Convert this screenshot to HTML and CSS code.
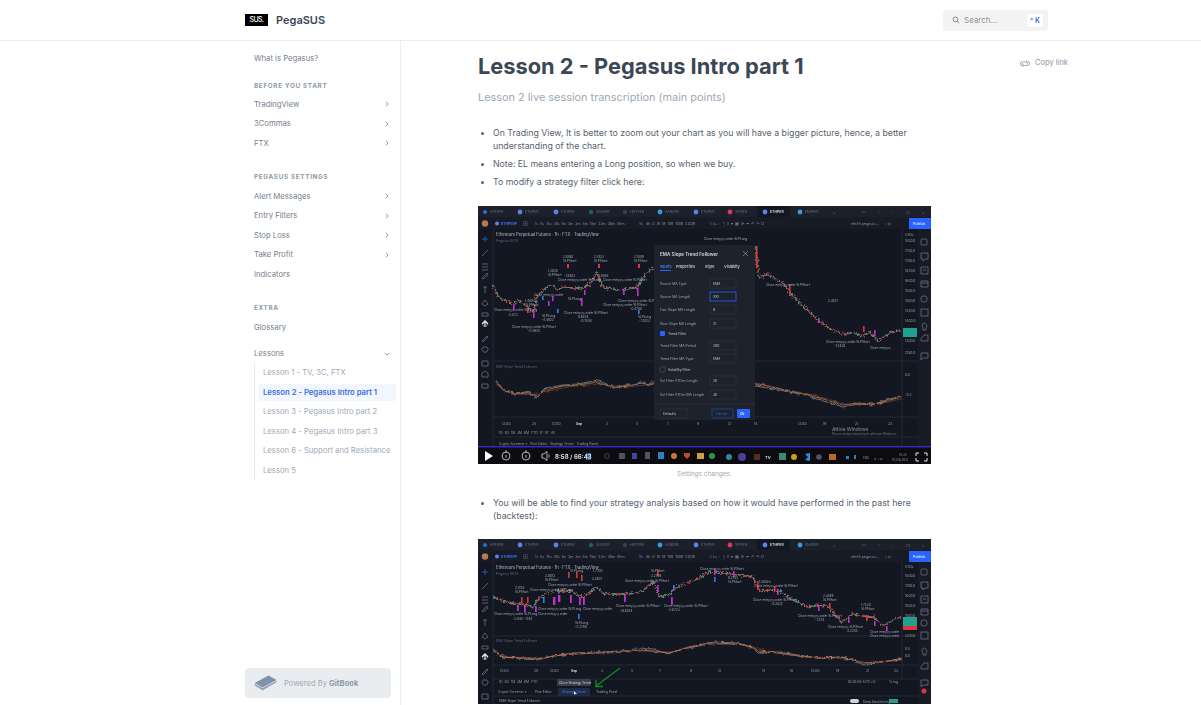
FILE: index.html
```html
<!DOCTYPE html>
<html lang="en">
<head>
    <meta charset="UTF-8">
    <title>Lesson 2 - Pegasus Intro part 1 - PegaSUS</title>
    <link rel="stylesheet" href="styles.css">
</head>
<body>
    <!-- Top bar -->
    <header class="topbar">
        <div class="brand">
            <span class="brand-logo">SUS.</span>
            <span class="brand-name">PegaSUS</span>
        </div>
        <div class="search">
            <svg class="search-icon" viewBox="0 0 12 12"><circle cx="5.2" cy="5.2" r="3.6"/><path d="M8 8l2.8 2.8"/></svg>
            <span class="search-text">Search...</span>
            <span class="search-key">^ K</span>
        </div>
    </header>

    <div class="page">
        <!-- Sidebar -->
        <aside class="sidebar">
            <nav class="nav">
                <a class="nav-item">What is Pegasus?</a>

                <h5 class="nav-title">Before you start</h5>
                <a class="nav-item">TradingView <svg class="chev" viewBox="0 0 8 8"><path d="M2.5 1l3 3-3 3"/></svg></a>
                <a class="nav-item">3Commas <svg class="chev" viewBox="0 0 8 8"><path d="M2.5 1l3 3-3 3"/></svg></a>
                <a class="nav-item">FTX <svg class="chev" viewBox="0 0 8 8"><path d="M2.5 1l3 3-3 3"/></svg></a>

                <h5 class="nav-title nav-title-gap">Pegasus settings</h5>
                <a class="nav-item">Alert Messages <svg class="chev" viewBox="0 0 8 8"><path d="M2.5 1l3 3-3 3"/></svg></a>
                <a class="nav-item">Entry Filters <svg class="chev" viewBox="0 0 8 8"><path d="M2.5 1l3 3-3 3"/></svg></a>
                <a class="nav-item">Stop Loss <svg class="chev" viewBox="0 0 8 8"><path d="M2.5 1l3 3-3 3"/></svg></a>
                <a class="nav-item">Take Profit <svg class="chev" viewBox="0 0 8 8"><path d="M2.5 1l3 3-3 3"/></svg></a>
                <a class="nav-item">Indicators</a>

                <h5 class="nav-title nav-title-gap">Extra</h5>
                <a class="nav-item">Glossary</a>
                <a class="nav-item nav-item-gap">Lessons <svg class="chev" viewBox="0 0 8 8"><path d="M1 2.5l3 3 3-3"/></svg></a>
                <div class="subnav">
                    <a class="sub-item">Lesson 1 - TV, 3C, FTX</a>
                    <a class="sub-item active">Lesson 2 - Pegasus Intro part 1</a>
                    <a class="sub-item">Lesson 3 - Pegasus Intro part 2</a>
                    <a class="sub-item">Lesson 4 - Pegasus Intro part 3</a>
                    <a class="sub-item">Lesson 6 - Support and Resistance</a>
                    <a class="sub-item">Lesson 5</a>
                </div>
            </nav>
            <div class="powered">
                <svg class="powered-icon" viewBox="0 0 23 16">
                    <path class="book-top" d="M0.5 8L14.5 0.5 22.5 5 8.5 12.5z"/>
                    <path class="book-side" d="M0.5 8.8L8.5 13.3 22.5 5.8V7.2L8.7 15.2 1 10.8z"/>
                </svg>
                <span>Powered By <b>GitBook</b></span>
            </div>
        </aside>

        <!-- Main content -->
        <main class="content">
            <article class="article">
                <h1>Lesson 2 - Pegasus Intro part 1</h1>
                <p class="lead">Lesson 2 live session transcription (main points)</p>

                <ul class="points">
                    <li>On Trading View, It is better to zoom out your chart as you will have a bigger picture, hence, a better understanding of the chart.</li>
                    <li>Note: EL means entering a Long position, so when we buy.</li>
                    <li>To modify a strategy filter click here:</li>
                </ul>

                <figure class="shot">
                    <svg class="tv tv-one" viewBox="0 0 453 258">
                        <defs>
                            <filter id="jag" x="-5%" y="-20%" width="110%" height="140%">
                                <feTurbulence type="fractalNoise" baseFrequency="0.45" numOctaves="2" seed="4"/>
                                <feDisplacementMap in="SourceGraphic" scale="6" xChannelSelector="R" yChannelSelector="G"/>
                            </filter>
                            <filter id="wob" x="-5%" y="-20%" width="110%" height="140%">
                                <feTurbulence type="fractalNoise" baseFrequency="0.25" numOctaves="2" seed="9"/>
                                <feDisplacementMap in="SourceGraphic" scale="3.5" xChannelSelector="R" yChannelSelector="G"/>
                            </filter>
                            <g id="tv-top">
                                <rect class="tv-bar" width="453" height="11"/>
                                <g class="tv-tabs">
                                    <circle cx="7" cy="6" r="2" class="c-blue"/><text x="12" y="7.2">APEPER</text>
                                    <circle cx="42" cy="6" r="2.4" class="c-lblue"/><text x="47" y="7.2">ETHPER</text>
                                    <circle cx="78" cy="6" r="2.4" class="c-lblue"/><text x="83" y="7.2">ETHPER</text>
                                    <circle cx="113" cy="6" r="2.2" class="c-teal"/><text x="118" y="7.2">SOLPER</text>
                                    <circle cx="147" cy="6" r="2.2" class="c-grey"/><text x="152" y="7.2">HNTPER</text>
                                    <circle cx="182" cy="6" r="2.4" class="c-sky"/><text x="187" y="7.2">SANDPE</text>
                                    <circle cx="218" cy="6" r="2.4" class="c-lblue"/><text x="223" y="7.2">ETHPER</text>
                                    <circle cx="252" cy="6" r="2.4" class="c-red"/><text x="257" y="7.2">YFIPER</text>
                                    <rect x="279" y="0" width="33" height="11" class="tv-tab-on"/>
                                    <circle cx="287" cy="6" r="2.4" class="c-lblue"/><text x="292" y="7.2" class="tab-on-text">ETHPER</text>
                                    <circle cx="322" cy="6" r="2.4" class="c-sky"/><text x="327" y="7.2">ENSPER</text>
                                    <text x="355" y="7.5">+</text>
                                    <text x="384" y="7.2">▭</text><text x="400" y="7.2">···</text>
                                    <text x="414" y="7.5">–</text><text x="428" y="7.5">❐</text><text x="444" y="7.5">×</text>
                                </g>
                                <rect class="tv-bg2" y="11" width="453" height="12"/>
                                <circle cx="7" cy="17.5" r="3.2" class="c-avatar"/>
                                <circle cx="19" cy="17.5" r="2" class="c-lblue"/>
                                <text x="23" y="18.8" class="t-sym">ETHPERP</text>
                                <text x="45" y="18.8" class="t-tool">⊕</text>
                                <text x="57" y="18.8" class="t-tool" xml:space="preserve">1s  5s  15s  30s  1m  2m  3m  5m  15m  23m  30m  45m</text>
                                <text x="161" y="18.8" class="t-sym">1h</text>
                                <text x="168" y="18.8" class="t-tool" xml:space="preserve">4h  D  W  M  10R  100R  2122R</text>
                                <text x="232" y="18.8" class="t-tool" xml:space="preserve">⌇ ⫴ ⌂ ⎍  ⋮ ⌸  ▾  ▦  ⟳  ⏮  ↶  ↷  ▢</text>
                                <text x="373" y="18.8" class="t-tool">eth/th pegasus...</text>
                                <text x="407" y="18.8" class="t-tool">⌕  ⚙</text>
                                <rect class="publish" x="431" y="12" width="22" height="11"/>
                                <text x="435" y="19" class="t-pub">Publish</text>
                            </g>
                            <g id="tv-left">
                                <g class="tv-line-soft">
                                    <path class="ico-blue" d="M4 33h6M7 30v6"/>
                                    <path d="M4 50l6-6M4 58h6M4 61h6M4 64h6M4 72l5-5 1 2-5 4zM5 81h4M7 81v6M4 98l3-4 3 4-3 2zM4 107h6v3H4zM5 116l2-2 2 2v4H5z"/>
                                    <path class="ico-white" d="M7 115v6M4 118l3-3 3 3"/>
                                    <path d="M4 135l5-5 1 1-5 5zM5 141a3 3 0 1 0 4 0zM4 155h6v5H4zM4 167l3-2 3 2v4H4zM4 178h6v4H4z"/>
                                </g>
                            </g>
                            <g id="tv-right">
                                <rect class="tv-bg2" x="440" y="23" width="13" height="217"/>
                                <g class="tv-line-soft">
                                    <rect x="443" y="33" width="6" height="6" rx="1"/>
                                    <path d="M443 47h7v6h-3l-2 2v-2h-2zM443 61h7v7h-7zM445 64h3M443 75h7v6h-7zM443 77h7"/>
                                    <circle cx="446" cy="93" r="3.2"/>
                                    <rect x="443" y="103" width="7" height="7"/>
                                    <path d="M446 117a3 3 0 0 1 2 5v2h-3v-2a3 3 0 0 1 1-5zM443 133l3-4 4 0v6h-7zM443 147h7v5h-5l-2 2z"/>
                                </g>
                            </g>
                        </defs>

                        <rect class="tv-bg" width="453" height="258"/>
                        <use href="#tv-top"/>
                        <use href="#tv-left"/>
                        <use href="#tv-right"/>
                        <path class="tv-div" d="M15 23v217M424 23v217M15 155h425M15 211h425M15 231h425"/>

                        <text x="18" y="30" class="t-title">Ethereum Perpetual Futures · 1h · FTX · TradingView</text>
                        <text x="18" y="36" class="t-dim">Pegasus BETA</text>

                        <!-- price line -->
                        <g class="jagged">
                            <polyline class="px-red" points="15,79 20,90 25,94 35,97 42,95 49,101 55,107 59,91 65,84 72,79 80,84 85,81 95,82 105,82 112,78 119,67 125,81 139,84 150,83 159,81 165,72 169,66 176,62"/>
                            <polyline class="px-teal" points="15,79 20,90 25,94 35,97 42,95 49,101 55,107 59,91 65,84 72,79 80,84 85,81 95,82 105,82 112,78 119,67 125,81 139,84 150,83 159,81 165,72 169,66 176,62"/>
                            <polyline class="px-red" points="277,40 281,72 290,68 299,74 306,78 312,87 325,100 338,112 345,118 355,124 365,128 375,127 385,130 392,126 400,135 412,127 423,124"/>
                            <polyline class="px-teal" points="277,40 281,72 290,68 299,74 306,78 312,87 325,100 338,112 345,118 355,124 365,128 375,127 385,130 392,126 400,135 412,127 423,124"/>
                        </g>

                        <!-- signals -->
                        <g class="sig-mag">
                            <rect x="35" y="98" width="1.6" height="6"/><rect x="70" y="95" width="1.6" height="5"/><rect x="74" y="90" width="1.6" height="5"/>
                            <rect x="103" y="92" width="1.6" height="8"/><rect x="106" y="84" width="1.6" height="5"/><rect x="145" y="84" width="1.6" height="5"/>
                            <rect x="159" y="82" width="1.6" height="8"/><rect x="55" y="105" width="1.6" height="7"/>
                            <rect x="340" y="112" width="1.6" height="5"/><rect x="396" y="124" width="1.6" height="6"/>
                        </g>
                        <g class="sig-red">
                            <rect x="89" y="58" width="2" height="4"/><rect x="120" y="58" width="2" height="4"/><rect x="160" y="58" width="2" height="4"/>
                            <rect x="49" y="102" width="1.6" height="5"/><rect x="311" y="78" width="1.6" height="12"/><rect x="278" y="40" width="1.6" height="22"/>
                            <rect x="385" y="120" width="1.6" height="6"/>
                        </g>
                        <g class="sig-blue">
                            <rect x="79" y="103" width="1.6" height="4"/><rect x="160" y="104" width="1.6" height="4"/><rect x="64" y="90" width="1.6" height="4"/>
                        </g>
                        <g class="t-sig">
                            <text x="85" y="52">2.0462</text><text x="85" y="56">SLPShort</text>
                            <text x="116" y="52">2.7823</text><text x="116" y="56">SLPShort</text>
                            <text x="156" y="52">2.1449</text><text x="156" y="56">SLPShort</text>
                            <text x="70" y="66">1.3028</text><text x="70" y="70">SLPShort</text>
                            <text x="86" y="71">-1.8923</text><text x="120" y="71">0.5568</text>
                            <text x="80" y="75">Close entry(s) order SLPLong</text><text x="125" y="75">Close entry(s) order SLPShort</text>
                            <text x="56" y="90">Close entry(s) order</text><text x="90" y="94">SLPLong</text><text x="125" y="100">Close entry(s) order SLPShort</text>
                            <text x="47" y="96">1.4804</text><text x="47" y="100">SLPShort</text>
                            <text x="16" y="105">Close entry(s) order SLPLong</text><text x="30" y="110">-2.873</text>
                            <text x="34" y="122">Close entry(s) order SLPShort</text><text x="50" y="126">+1.8924</text>
                            <text x="64" y="111">SLPLong</text><text x="64" y="115">+1.8923</text>
                            <text x="86" y="108">Close entry(s) order SLPShort</text><text x="100" y="112">0.6284</text><text x="102" y="116">-0.7848</text>
                            <text x="140" y="96">Close entry(s) order SLPShort</text><text x="152" y="104">-0.4780</text>
                            <text x="160" y="112">SLPLong</text><text x="161" y="116">-1.7423</text>
                            <text x="288" y="80">Close entry(s) order SLPShort</text>
                            <text x="348" y="137">Close entry(s) order SLPShort</text>
                            <text x="356" y="141">-1.2430</text>
                            <text x="392" y="143">Close entry(s)</text>
                            <text x="350" y="96">2.3057</text>
                            <text x="226" y="34">Close entry(s) order SLPLong</text>
                        </g>

                        <!-- price axis -->
                        <g class="t-axis">
                            <text x="427" y="30">USD▾</text><text x="427" y="36">1800.0</text><text x="427" y="46">1750.0</text><text x="427" y="56">1700.0</text>
                            <text x="427" y="66">1650.0</text><text x="427" y="76">1600.0</text><text x="427" y="86">1550.0</text><text x="427" y="96">1500.0</text>
                            <text x="427" y="106">1450.0</text><text x="427" y="116">1400.0</text><text x="427" y="136">1300.0</text><text x="427" y="148">1250.0</text>
                            <text x="427" y="170">0.0</text><text x="427" y="190">-0.2</text>
                        </g>
                        <rect x="425" y="122" width="14" height="9" class="tag-teal"/>

                        <!-- indicator pane -->
                        <text x="18" y="162" class="t-dim">EMA Slope Trend Follower</text>
                        <g class="wobbly">
                            <polyline class="ind-grey" points="17,173 25,183 35,188 50,187 58,192 68,182 85,179 100,178 120,174 135,181 150,179 163,176 172,178 180,172 277,180 290,182 312,186 330,190 345,195 365,201 380,198 395,199 405,195 423,190"/>
                            <polyline class="ind-orange" points="17,175 25,184 35,187 50,186 58,190 68,184 85,180 100,179 120,176 135,182 150,180 163,177 172,179 180,175 277,178 290,180 312,185 330,189 345,193 365,199 380,197 395,198 405,196 423,191"/>
                            <polyline class="ind-red" points="17,177 28,186 40,188 55,189 70,185 90,181 120,178 150,181 176,178 277,177 300,182 340,190 370,199 400,198 423,193"/>
                        </g>

                        <g class="t-axis">
                            <text x="24" y="218.5">12:00</text><text x="54" y="218.5">28</text><text x="74" y="218.5">12:00</text><text x="98" y="218.5" class="t-strong">Sep</text>
                            <text x="128" y="218.5">2</text><text x="158" y="218.5">5</text><text x="189" y="218.5">7</text><text x="219" y="218.5">9</text><text x="250" y="218.5">12</text><text x="276" y="218.5">14</text>
                            <text x="320" y="218.5">12:00</text><text x="345" y="218.5">19</text><text x="377" y="218.5">21</text><text x="410" y="218.5">23</text>
                            <text x="21" y="228" xml:space="preserve">1D  5D  1M  3M  6M  YTD  1Y  5Y  All</text>
                            <text x="21" y="238.5" xml:space="preserve">Crypto Screener ▾   Pine Editor   Strategy Tester   Trading Panel</text>
                        </g>

                        <!-- settings dialog -->
                        <g>
                            <rect class="dlg" x="176" y="39" width="101" height="175" rx="1"/>
                            <text x="182" y="50" class="d-title">EMA Slope Trend Follower</text>
                            <path class="dlg-x" d="M265 45l5 5M270 45l-5 5"/>
                            <text x="182" y="62" class="d-tab-on">Inputs</text><rect class="d-blue" x="182" y="64" width="11" height="1"/>
                            <text x="198" y="62" class="d-tab">Properties</text><text x="227" y="62" class="d-tab">Style</text><text x="246" y="62" class="d-tab">Visibility</text>
                            <g class="d-label">
                                <text x="182" y="79">Source MA Type</text><text x="182" y="92">Source MA Length</text><text x="182" y="105">Fast Slope MA Length</text><text x="182" y="119">Slow Slope MA Length</text>
                                <text x="190" y="129" class="d-bright">Trend Filter</text><text x="182" y="141">Trend Filter MA Period</text><text x="182" y="154">Trend Filter MA Type</text>
                                <text x="190" y="165" class="d-bright">Volatility Filter</text><text x="182" y="176">Vol Filter STDev Length</text><text x="182" y="190">Vol Filter STDev MA Length</text>
                            </g>
                            <g class="d-input">
                                <rect x="232" y="73" width="26" height="9"/><rect x="232" y="99" width="26" height="9"/><rect x="232" y="113" width="26" height="9"/>
                                <rect x="232" y="135" width="26" height="9"/><rect x="232" y="148" width="26" height="9"/><rect x="232" y="170" width="26" height="9"/><rect x="232" y="184" width="26" height="9"/>
                                <rect x="182" y="203" width="27" height="9"/>
                            </g>
                            <rect class="d-focus" x="232" y="86" width="26" height="9"/>
                            <g class="d-val">
                                <text x="235" y="79">EMA</text><text x="235" y="92">100</text><text x="235" y="105">9</text><text x="235" y="119">21</text><text x="235" y="141">200</text>
                                <text x="235" y="154">EMA</text><text x="235" y="176">20</text><text x="235" y="190">30</text><text x="185" y="209">Defaults</text>
                            </g>
                            <rect class="d-blue" x="182" y="125" width="5" height="5" rx="1"/>
                            <rect class="d-check" x="182" y="161" width="5" height="5" rx="1"/>
                            <path class="dlg-div" d="M176 198h101"/>
                            <rect class="d-cancel" x="234" y="203" width="21" height="9" rx="1"/>
                            <text x="238" y="209" class="d-cancel-t">Cancel</text>
                            <rect class="d-blue" x="259" y="203" width="13" height="9" rx="1"/>
                            <text x="262" y="209" class="d-ok">Ok</text>
                        </g>

                        <text x="354" y="224.5" class="t-act">Attiva Windows</text>
                        <text x="354" y="229" class="t-act2">Passa a Impostazioni per attivare Windows.</text>

                        <!-- video player bar -->
                        <rect class="pl-bar" y="241" width="453" height="17"/>
                        <rect class="pl-track" y="240" width="453" height="1.4"/>
                        <path class="pl-white" d="M7 245v10l8-5z"/>
                        <g class="pl-line">
                            <circle cx="28" cy="250" r="4"/><path d="M28 244v3M28 249v3"/>
                            <circle cx="48" cy="250" r="4"/><path d="M48 244v3M48 249v3"/>
                            <path d="M64 248h2l3-2.5v9l-3-2.5h-2zM71 248.5v3"/>
                        </g>
                        <rect class="pl-select" x="108" y="247" width="5" height="7"/>
                        <text x="77" y="253" class="pl-time">8:58 / 66:43</text>
                        <g class="pl-apps">
                            <circle cx="129" cy="250" r="2.4" class="a-o"/><rect x="141" y="247" width="6" height="6" class="a-grey"/><rect x="154" y="247" width="5" height="6" class="a-indigo"/>
                            <rect x="167" y="246" width="5" height="7" class="a-grey"/><rect x="180" y="246" width="6" height="7" class="a-sky"/><circle cx="196" cy="250" r="3" class="a-chrome"/>
                            <path d="M206 247h6v3l-3 3-3-3z" class="a-brave"/><rect x="219" y="247" width="7" height="6" class="a-gold"/><circle cx="234" cy="250" r="3" class="a-green"/>
                            <circle cx="251" cy="251" r="3" class="a-sky2"/><circle cx="264" cy="251" r="4" class="a-purple"/><rect x="276" y="248" width="6" height="6" class="a-dark"/>
                            <text x="287" y="253" class="a-tv">TV</text><rect x="301" y="247" width="7" height="7" class="a-teal"/><circle cx="316" cy="251" r="3" class="a-yellow"/>
                            <path d="M327 248l5-1v8l-5-1 3-3z" class="a-code"/><circle cx="341" cy="251" r="2.8" class="a-grey"/><rect x="351" y="248" width="7" height="6" class="a-orange"/>
                            <rect x="368" y="250" width="3" height="3" class="a-sky"/><rect x="376" y="249" width="2" height="4" class="a-sky"/>
                            <text x="385" y="253" class="pl-small">ENG</text><text x="396" y="253.5" class="pl-small">⟳ ◖ ⊟</text>
                            <text x="421" y="250" class="pl-small">10:35</text><text x="414" y="254.5" class="pl-small">07/09/2021</text>
                        </g>
                        <path class="pl-full" d="M438 250v-3h3M446 247h3v3M449 252v3h-3M441 255h-3v-3"/>
                    </svg>
                    <figcaption>Settings changes.</figcaption>
                </figure>

                <ul class="points points-2">
                    <li>You will be able to find your strategy analysis based on how it would have performed in the past here (backtest):</li>
                </ul>

                <figure class="shot shot-2">
                    <svg class="tv" viewBox="0 0 453 165">
                        <rect class="tv-bg" width="453" height="165"/>
                        <use href="#tv-top"/>
                        <use href="#tv-left"/>
                        <rect class="tv-bg2" x="440" y="23" width="13" height="142"/>
                        <g class="tv-line-soft">
                            <rect x="443" y="30" width="6" height="6" rx="1"/>
                            <path d="M443 43h7v6h-3l-2 2v-2h-2zM443 57h7v7h-7zM445 60h3M443 70h7v6h-7zM443 72h7"/>
                            <circle cx="446" cy="84" r="3.2"/>
                            <rect x="443" y="93" width="7" height="7"/>
                            <path d="M446 109a3 3 0 0 1 2 5v2h-3v-2a3 3 0 0 1 1-5zM443 128l3-4 4 0v6h-7zM443 141h7v5h-5l-2 2z"/>
                        </g>
                        <path class="tv-div" d="M15 23v142M424 23v117M15 97h425M15 126h425M15 140h425M15 157h425"/>

                        <text x="18" y="30" class="t-title">Ethereum Perpetual Futures · 1h · FTX · TradingView</text>
                        <text x="18" y="36" class="t-dim">Pegasus BETA</text>

                        <g class="jagged">
                            <polyline class="px-red" points="15,58 22,60 29,63 42,65 50,66 55,68 62,58 70,54 79,52 92,52 100,56 105,58 112,53 119,48 125,55 137,55 149,55 158,54 165,52 175,42 179,50 182,58 192,55 199,48 215,42 232,33 245,34 255,35 275,38 282,52 292,51 302,52 310,58 320,63 329,68 340,66 349,67 358,77 364,83 375,75 385,77 395,78 405,87 413,82 422,78"/>
                            <polyline class="px-teal" points="15,58 22,60 29,63 42,65 50,66 55,68 62,58 70,54 79,52 92,52 100,56 105,58 112,53 119,48 125,55 137,55 149,55 158,54 165,52 175,42 179,50 182,58 192,55 199,48 215,42 232,33 245,34 255,35 275,38 282,52 292,51 302,52 310,58 320,63 329,68 340,66 349,67 358,77 364,83 375,75 385,77 395,78 405,87 413,82 422,78"/>
                        </g>

                        <g class="sig-mag">
                            <rect x="39" y="66" width="1.8" height="6"/><rect x="46" y="67" width="1.8" height="6"/><rect x="57" y="67" width="1.8" height="6"/>
                            <rect x="75" y="58" width="2.4" height="8"/><rect x="80" y="56" width="2.4" height="7"/><rect x="92" y="56" width="1.8" height="8"/>
                            <rect x="101" y="58" width="1.8" height="8"/><rect x="105" y="58" width="1.8" height="8"/><rect x="146" y="56" width="1.8" height="7"/>
                            <rect x="179" y="46" width="1.6" height="7"/><rect x="193" y="58" width="1.8" height="8"/><rect x="236" y="30" width="1.6" height="6"/>
                            <rect x="255" y="32" width="1.6" height="6"/><rect x="299" y="50" width="1.6" height="6"/><rect x="340" y="66" width="1.6" height="6"/>
                            <rect x="370" y="79" width="1.6" height="5"/><rect x="396" y="82" width="1.6" height="5"/><rect x="408" y="87" width="1.6" height="5"/>
                        </g>
                        <g class="sig-red">
                            <rect x="43" y="58" width="1.6" height="6"/><rect x="49" y="58" width="1.6" height="6"/><rect x="90" y="33" width="1.6" height="6"/>
                            <rect x="98" y="33" width="1.6" height="6"/><rect x="103" y="36" width="1.6" height="6"/><rect x="179" y="31" width="1.6" height="6"/>
                            <rect x="279" y="42" width="1.6" height="9"/><rect x="296" y="47" width="1.6" height="5"/><rect x="351" y="64" width="1.6" height="6"/>
                            <rect x="388" y="76" width="1.6" height="6"/>
                        </g>
                        <g class="sig-blue">
                            <rect x="65" y="58" width="1.6" height="6"/><rect x="100" y="75" width="1.6" height="5"/><rect x="195" y="46" width="1.6" height="5"/>
                            <rect x="236" y="38" width="1.6" height="5"/>
                        </g>
                        <g class="t-sig">
                            <text x="37" y="50">2.1785</text><text x="37" y="54">SLPShort</text>
                            <text x="67" y="38">2.0073</text><text x="67" y="42">SLPShort</text>
                            <text x="70" y="47">Close entry(s) order SLPShort</text><text x="52" y="52">Close entry(s) order SLPLong</text>
                            <text x="114" y="41">2.2407</text><text x="115" y="33">1.7700</text><text x="92" y="33">SLPLong</text>
                            <text x="147" y="43">Close entry(s) order SLPShort</text><text x="173" y="38">2.2749</text><text x="173" y="33">SLPShort</text>
                            <text x="16" y="76">Close entry(s) order SLPLong Close entry(s) order</text><text x="35" y="81">-2.048 -1.144</text>
                            <text x="60" y="71">Close entry(s) order SLPLong</text><text x="105" y="71">Close entry(s) order</text>
                            <text x="138" y="68">Close entry(s) order SLPShort</text>
                            <text x="97" y="85">SLPLong</text><text x="97" y="89">+1.2700</text><text x="142" y="73">+0.6284</text>
                            <text x="186" y="68">Close entry(s) order SLPShort</text><text x="190" y="72">+1.6723</text>
                            <text x="222" y="31">Close entry(s) order SLPShort</text>
                            <text x="250" y="40">0.2143</text><text x="250" y="44">SLPShort</text>
                            <text x="276" y="48">Close entry(s) order SLPShort</text><text x="281" y="44">1.5882n</text>
                            <text x="275" y="62">Close entry(s) order SLPShort</text><text x="293" y="66">-0.2822</text>
                            <text x="320" y="78">Close entry(s) order SLPShort</text><text x="337" y="82">-1.274</text>
                            <text x="345" y="58">2.3049</text><text x="345" y="62">SLPShort</text>
                            <text x="383" y="67">1.7234</text><text x="383" y="71">SLPShort</text>
                            <text x="350" y="89">Close entry(s) SLPShort</text><text x="368" y="93">-2.2245</text>
                            <text x="392" y="94">Close entry(s) order</text><text x="392" y="98">Close entry(s) order</text>
                        </g>
                        <g class="t-axis">
                            <text x="427" y="29">USD▾</text><text x="427" y="38">1800.0</text><text x="427" y="48">1700.0</text><text x="427" y="58">1600.0</text>
                            <text x="427" y="68">1550.0</text><text x="427" y="78">1500.0</text><text x="427" y="98">1300.0</text>
                            <text x="427" y="111">0.5</text><text x="427" y="118">0.0</text>
                        </g>
                        <rect x="425" y="78" width="14" height="9" class="tag-teal"/>
                        <rect x="425" y="87" width="14" height="4" class="tag-red"/>

                        <text x="18" y="103" class="t-dim">EMA Slope Trend Follower</text>
                        <g class="wobbly">
                            <polyline class="ind-grey" points="15,110 25,118 45,120 60,121 75,117 95,114 120,113 145,112 162,109 175,110 190,115 210,108 235,103 260,104 275,109 280,114 300,113 320,116 340,119 365,118 385,126 410,122 424,119"/>
                            <polyline class="ind-orange" points="15,112 25,118 45,119 60,120 75,117 95,115 120,114 145,113 162,111 175,112 190,114 210,109 235,104 260,105 275,108 280,112 300,114 320,117 340,119 365,118 385,124 410,122 424,120"/>
                            <polyline class="ind-red" points="15,113 30,118 60,119 90,115 130,114 165,112 195,113 220,106 260,105 290,112 330,118 370,120 390,124 424,121"/>
                        </g>

                        <g class="t-axis">
                            <text x="22" y="133">12:00</text><text x="56" y="133">29</text><text x="72" y="133">12:00</text><text x="93" y="133" class="t-strong">Sep</text>
                            <text x="123" y="133">3</text><text x="153" y="133">5</text><text x="181" y="133">7</text><text x="212" y="133">9</text><text x="240" y="133">12</text><text x="284" y="133">14</text>
                            <text x="312" y="133">16</text><text x="333" y="133">12:00</text><text x="358" y="133">19</text><text x="388" y="133">21</text><text x="416" y="133">23</text>
                            <text x="21" y="144" xml:space="preserve">1D  5D  1M  3M  6M  YTD</text>
                            <text x="370" y="144">16:20:08 (UTC+2)</text><text x="411" y="144">%  log</text>
                            <text x="20" y="154">Crypto Screener ▾</text><text x="57" y="154">Pine Editor</text>
                            <text x="118" y="154">Trading Panel</text><text x="21" y="163">EMA Slope Trend Follower</text>
                        </g>
                        <rect class="tip" x="79" y="140" width="34" height="7" rx="1"/>
                        <text x="81" y="145" class="t-tip">Close Strategy Tester</text>
                        <rect class="tab-hover" x="80" y="149" width="32" height="8"/>
                        <text x="84" y="154" class="t-tab-blue">Strategy Tester</text>
                        <path class="arrow" d="M142 129L118 147M118 141v6.5h7"/>
                        <path class="cursor" d="M96 152l0 4 1-1 2 0z"/>
                        <rect class="toggle" x="372" y="160" width="9" height="4" rx="2"/>
                        <text x="385" y="163.5" class="t-axis-s">Deep Backtesting</text>
                        <rect class="tag-teal" x="411" y="160" width="9" height="4"/>
                        <circle class="tag-red" cx="446" cy="152" r="2.5"/>
                    </svg>
                </figure>
            </article>

            <a class="copy-link">
                <svg class="copy-icon" viewBox="0 0 10 9"><path d="M4 7H2.5a2.1 2.1 0 0 1 0-4.2h3a2.1 2.1 0 0 1 2 2.6"/><path d="M6 2.3H7.5a2.1 2.1 0 0 1 0 4.2h-3a2.1 2.1 0 0 1-2-2.6"/></svg>
                Copy link
            </a>
        </main>
    </div>
</body>
</html>
```

FILE: styles.css
```css
* {
    box-sizing: border-box;
}

html, body {
    height: 100%;
}

body {
    margin: 0;
    overflow: hidden;
    font-family: Inter, "Liberation Sans", sans-serif;
    color: #3b4754;
    background-color: #fff;
}

/* top bar */
.topbar {
    height: 41px;
    display: flex;
    align-items: center;
    justify-content: space-between;
    padding: 0 153px 0 245px;
    border-bottom: 1px solid #e9ebed;
}

.brand {
    display: flex;
    align-items: center;
    gap: 8px;
}

.brand-logo {
    width: 23px;
    height: 12px;
    background-color: #000;
    color: #fff;
    font-size: 7px;
    font-weight: 500;
    line-height: 12px;
    letter-spacing: -0.6px;
    text-align: center;
}

.brand-name {
    font-size: 11px;
    font-weight: 600;
}

.search {
    width: 105px;
    height: 21px;
    display: flex;
    align-items: center;
    padding: 0 5px 0 9px;
    background-color: #f3f3f4;
    border-radius: 3px;
    font-size: 8px;
    color: #8f9499;
}

.search-icon {
    width: 8px;
    height: 8px;
    margin-right: 4px;
    fill: none;
    stroke: #66727e;
    stroke-width: 1.2;
}

.search-text {
    flex: 1;
}

.search-key {
    width: 16px;
    height: 13px;
    background-color: #fff;
    border-radius: 2px;
    color: #3a6cdf;
    font-size: 7px;
    font-weight: 600;
    line-height: 13px;
    text-align: center;
}

.page {
    display: flex;
    height: 664px;
}

/* sidebar */
.sidebar {
    width: 401px;
    padding: 0 9px 7px 245px;
    border-right: 1px solid #eceef0;
    display: flex;
    flex-direction: column;
    justify-content: space-between;
}

.nav {
    padding-top: 8.2px;
}

.nav-item {
    height: 19.5px;
    display: flex;
    align-items: center;
    justify-content: space-between;
    padding: 0 1px 0 9px;
    font-size: 7.7px;
    color: #74808c;
}

.nav-item-gap {
    margin-top: 7px;
}

.nav-title {
    margin: 7px 0 0;
    height: 19px;
    padding: 6px 0 0 9px;
    font-size: 6.3px;
    font-weight: 700;
    letter-spacing: 0.7px;
    text-transform: uppercase;
    color: #8b99a8;
}

.nav-title-gap {
    margin-top: 14.3px;
}

.chev {
    width: 6px;
    height: 6px;
    fill: none;
    stroke: #74808c;
    stroke-width: 1.1;
}

.subnav {
    margin-left: 9px;
    margin-right: -5px;
    border-left: 1px solid #e6e9ec;
}

.sub-item {
    display: block;
    height: 19.5px;
    margin-left: 3px;
    padding-left: 5px;
    font-size: 7.7px;
    line-height: 19.5px;
    color: #9daab6;
    white-space: nowrap;
}

.sub-item.active {
    height: 17.5px;
    margin-top: 1px;
    margin-bottom: 1px;
    line-height: 17.5px;
    background-color: #f2f6fe;
    border-radius: 2px;
    color: #3a6cdf;
    font-weight: 600;
}

.powered {
    height: 30px;
    display: flex;
    align-items: center;
    gap: 7px;
    padding-left: 9px;
    background-color: #eaedf0;
    border-radius: 4px;
    font-size: 7.6px;
    color: #9daab6;
}

.powered b {
    color: #8b99a8;
}

.powered-icon {
    width: 23px;
    height: 16px;
}

.book-top {
    fill: #7e93a8;
}

.book-side {
    fill: #8ea0b2;
}

/* article */
.content {
    flex: 1;
    display: flex;
    align-items: flex-start;
    padding: 0 133px 0 77px;
    justify-content: space-between;
}

.article {
    width: 453px;
}

.article h1 {
    margin: 11px 0 0;
    font-size: 21.8px;
    font-weight: 700;
    line-height: 29px;
    color: #3b4754;
}

.lead {
    margin: 8px 0 0;
    font-size: 10.9px;
    line-height: 16px;
    color: #9daab6;
}

.points {
    margin: 22px 0 0;
    padding-left: 15px;
    font-size: 8.77px;
    line-height: 13px;
    color: #56626e;
}

.points li {
    margin-bottom: 5px;
}

.points-2 {
    margin-top: 0;
}

.shot {
    margin: 16.5px 0 0;
}

.shot-2 {
    margin-top: 16px;
}

.tv {
    display: block;
    width: 453px;
    filter: blur(0.4px);
    font-family: Inter, "Liberation Sans", sans-serif;
}

.shot figcaption {
    height: 33.5px;
    padding-top: 6px;
    font-size: 6.5px;
    line-height: 9px;
    text-align: center;
    color: #9daab6;
}

.copy-link {
    display: flex;
    align-items: center;
    gap: 5px;
    margin-top: 16px;
    font-size: 7.5px;
    line-height: 12px;
    color: #8a96a2;
    white-space: nowrap;
}

.copy-icon {
    width: 10px;
    height: 9px;
    fill: none;
    stroke: #8a96a2;
    stroke-width: 0.8;
}

/* trading view screenshot colours */
.tv-bg { fill: #131722; }
.tv-bg2 { fill: #171b26; }
.tv-bar { fill: #1c202b; }
.tv-tab-on { fill: #131722; }
.tv-div { stroke: #2a2e39; stroke-width: 0.7; fill: none; }
.tv-tabs text { font-size: 3.5px; fill: #6a7180; }
.tv-tabs .tab-on-text { fill: #c4c8d2; font-weight: 700; }
.c-blue { fill: #2f6be0; }
.c-lblue { fill: #5f82e8; }
.c-teal { fill: #1f5f68; }
.c-grey { fill: #3a3f4b; }
.c-sky { fill: #2f9fe0; }
.c-red { fill: #e03560; }
.c-avatar { fill: #b57a4f; }
.t-sym { font-size: 3.5px; font-weight: 700; fill: #3f6fe0; }
.t-tool { font-size: 3.5px; fill: #8f95a3; }
.publish { fill: #2962ff; }
.t-pub { font-size: 3.5px; font-weight: 600; fill: #d6e2ff; }
.tv-line-soft { fill: none; stroke: #757b89; stroke-width: 0.7; }
.ico-blue { stroke: #2f6be0; }
.ico-white { stroke: #e6e8ee; stroke-width: 1.2; }
.t-title { font-size: 4.2px; fill: #b8bcc8; }
.t-dim { font-size: 3.3px; fill: #5f6675; }
.jagged { filter: url(#jag); }
.wobbly { filter: url(#wob); }
.px-red { fill: none; stroke: #c9504c; stroke-width: 1.3; }
.px-teal { fill: none; stroke: #2a9d8f; stroke-width: 1.3; stroke-dasharray: 4 5; }
.sig-mag { fill: #c52fd0; }
.sig-red { fill: #d9383c; }
.sig-blue { fill: #3a78e8; }
.t-sig { font-size: 3.1px; fill: #a9adb8; }
.t-axis { font-size: 3.3px; fill: #989da9; }
.t-axis-s { font-size: 3.3px; fill: #989da9; }
.t-strong { font-weight: 700; fill: #d1d4dc; }
.tag-teal { fill: #22a08f; }
.tag-red { fill: #d9383c; }
.ind-grey { fill: none; stroke: #a7abb5; stroke-width: 0.6; }
.ind-orange { fill: none; stroke: #d99545; stroke-width: 0.7; }
.ind-red { fill: none; stroke: #b5534b; stroke-width: 0.5; }
.dlg { fill: #1e222d; }
.dlg-x { fill: none; stroke: #8f95a3; stroke-width: 0.7; }
.dlg-div { stroke: #2f3340; stroke-width: 0.7; }
.d-title { font-size: 4.6px; font-weight: 600; fill: #d1d4dc; }
.d-tab { font-size: 3.8px; font-weight: 600; fill: #c2c6d0; }
.d-tab-on { font-size: 3.8px; font-weight: 600; fill: #3f7cf0; }
.d-blue { fill: #2962ff; }
.d-label { font-size: 3.4px; fill: #a2a7b3; }
.d-bright { fill: #c2c6d0; }
.d-input rect { fill: #1e222d; stroke: #363a45; stroke-width: 0.5; }
.d-focus { fill: #1e222d; stroke: #2962ff; stroke-width: 0.8; }
.d-val { font-size: 3.4px; fill: #c2c6d0; }
.d-check { fill: none; stroke: #5a606d; stroke-width: 0.5; }
.d-cancel { fill: none; stroke: #1f4da8; stroke-width: 0.7; }
.d-cancel-t { font-size: 3.4px; fill: #2f6be0; }
.d-ok { font-size: 3.4px; font-weight: 600; fill: #dfe8ff; }
.t-act { font-size: 5px; fill: #8a8f9b; }
.t-act2 { font-size: 3.2px; fill: #70757f; }
.pl-bar { fill: #0c0c10; }
.pl-track { fill: #3a27d6; }
.pl-white { fill: #fff; }
.pl-line { fill: none; stroke: #d8d8d8; stroke-width: 0.8; }
.pl-select { fill: #2d5fa8; }
.pl-time { font-size: 6.1px; font-weight: 600; fill: #e8e8e8; }
.pl-small { font-size: 3px; fill: #8a8f9b; }
.pl-full { fill: none; stroke: #e8e8e8; stroke-width: 1; }
.a-o { fill: none; stroke: #555b68; stroke-width: 0.7; }
.a-grey { fill: #4f5663; }
.a-indigo { fill: #3f47a8; }
.a-sky { fill: #2d7fc0; }
.a-chrome { fill: #c9783a; }
.a-brave { fill: #c8472f; }
.a-gold { fill: #c9a23a; }
.a-green { fill: #2a9a4a; }
.a-sky2 { fill: #2d86a8; }
.a-purple { fill: #4a3f9c; }
.a-dark { fill: #5a2a1c; }
.a-tv { font-size: 4px; font-weight: 700; fill: #d8d8d8; }
.a-teal { fill: #3a8a78; }
.a-yellow { fill: #c9a21c; }
.a-code { fill: #2f8bd8; }
.a-orange { fill: #b86a28; }
.tip { fill: #3a3e4a; }
.t-tip { font-size: 3.2px; fill: #d1d4dc; }
.tab-hover { fill: #1f2a44; }
.t-tab-blue { font-size: 3.3px; fill: #3f7cf0; }
.arrow { fill: none; stroke: #12891f; stroke-width: 1.3; }
.cursor { fill: #fff; }
.toggle { fill: #d1d4dc; }
```
